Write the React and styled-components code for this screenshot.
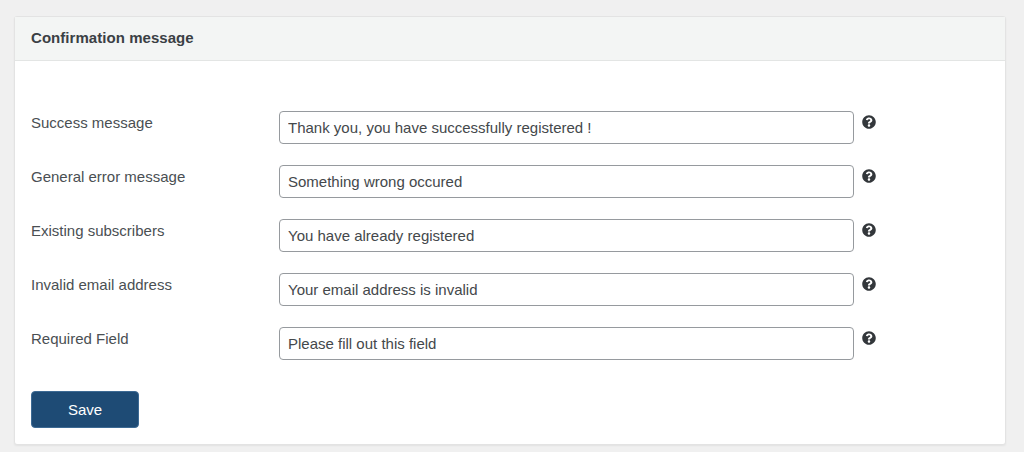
import React from 'react';
import styled, { createGlobalStyle } from 'styled-components';
import { FaQuestionCircle } from 'react-icons/fa';

const GlobalStyle = createGlobalStyle`
    html, body {
        margin: 0;
        background: #f0f0f0;
        font-family: "Liberation Sans", Arial, sans-serif;
    }
`;

const Page = styled.div`
    height: 452px;
    box-sizing: border-box;
    padding: 16px 18px 0 14px;
    overflow: hidden;
`;

const Card = styled.div`
    height: 429px;
    box-sizing: border-box;
    background: #fff;
    border: 1px solid #e3e3e3;
    border-radius: 3px;
    box-shadow: 0 1px 2px rgba(0, 0, 0, 0.06);
`;

const CardHeader = styled.div`
    height: 44px;
    box-sizing: border-box;
    padding: 0 0 2px 16px;
    display: flex;
    align-items: center;
    background: #f3f5f4;
    border-bottom: 1px solid #e3e5e4;
    font-size: 15px;
    font-weight: 700;
    letter-spacing: 0.05px;
    color: #3a4044;
`;

const Form = styled.div`
    padding: 50px 0 0 16px;
`;

const Row = styled.div`
    height: 32px;
    margin-bottom: 22px;
    display: flex;
`;

const Label = styled.div`
    width: 248px;
    padding-top: 3px;
    font-size: 15px;
    line-height: 18px;
    color: #4a4f53;
`;

const TextInput = styled.input`
    width: 575px;
    height: 33px;
    box-sizing: border-box;
    padding: 0 8px;
    background: #fff;
    border: 1px solid #969a9e;
    border-radius: 4px;
    font-family: inherit;
    font-size: 15px;
    color: #44484b;
    outline: none;
`;

const HelpIcon = styled.span`
    margin: 4px 0 0 8px;
    width: 14px;
    height: 14px;
    display: block;
    color: #33373b;

    svg {
        display: block;
    }
`;

const SaveButton = styled.button`
    width: 108px;
    height: 37px;
    margin-top: 10px;
    padding: 0;
    background: #1e4b75;
    border: 1px solid #3d6a94;
    border-radius: 4px;
    font-family: inherit;
    font-size: 15px;
    color: #fff;
`;

const fields = [
    ['Success message', 'Thank you, you have successfully registered !'],
    ['General error message', 'Something wrong occured'],
    ['Existing subscribers', 'You have already registered'],
    ['Invalid email address', 'Your email address is invalid'],
    ['Required Field', 'Please fill out this field'],
];

function App() {
    return (
        <Page>
            <GlobalStyle />
            <Card>
                <CardHeader>Confirmation message</CardHeader>
                <Form>
                    {fields.map(([label, value]) => (
                        <Row key={label}>
                            <Label>{label}</Label>
                            <TextInput defaultValue={value} />
                            <HelpIcon>
                                <FaQuestionCircle size={14} />
                            </HelpIcon>
                        </Row>
                    ))}
                    <SaveButton>Save</SaveButton>
                </Form>
            </Card>
        </Page>
    );
}

export default App;
